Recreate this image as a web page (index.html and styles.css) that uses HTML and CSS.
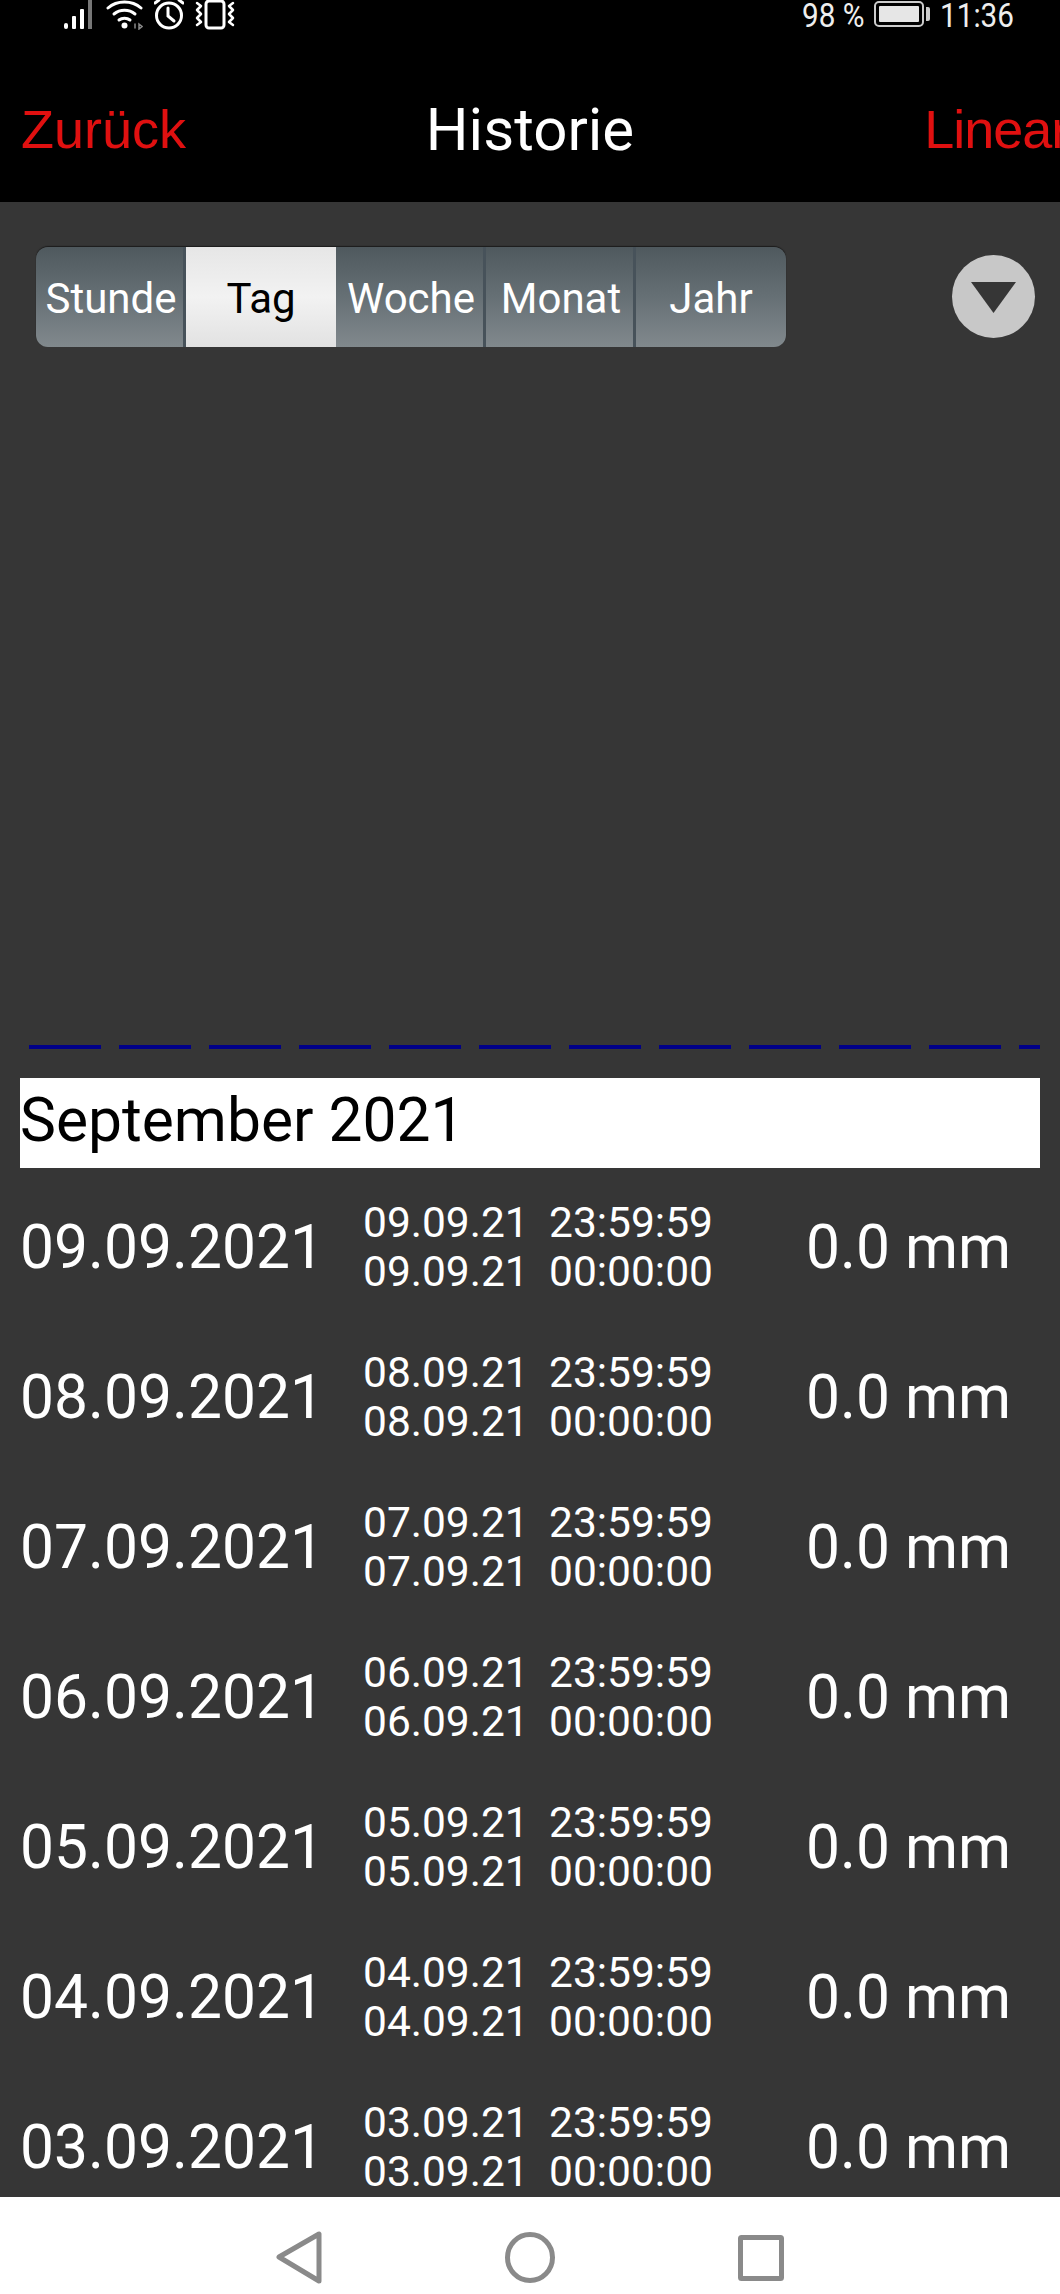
FILE: index.html
```html
<!DOCTYPE html>
<html lang="de">
<head>
    <meta charset="UTF-8">
    <title>Historie</title>
    <link rel="stylesheet" href="styles.css">
</head>
<body>
<div class="phone">
    <div class="top">
        <div class="status">
            <div class="status-icons">
                <svg class="ico-signal" width="32" height="30" viewBox="0 0 32 30">
                    <rect x="0" y="23" width="4" height="6" rx="2" fill="#fff"/>
                    <rect x="8" y="16" width="4" height="13" rx="1" fill="#fff"/>
                    <rect x="16" y="9" width="4" height="20" rx="1" fill="#fff"/>
                    <rect x="24" y="0" width="4" height="29" fill="#777"/>
                </svg>
                <svg class="ico-wifi" width="37" height="30" viewBox="0 0 37 30" fill="none" stroke="#fff" stroke-width="3" stroke-linecap="round">
                    <path d="M2 8C11 0 26 0 35 8"/>
                    <path d="M8 14C14 9 23 9 29 14"/>
                    <path d="M13 20C16 17.500 21 17.500 24 20"/>
                    <circle cx="18.500" cy="25.500" r="3" fill="#fff" stroke="none"/>
                    <path d="M29 24v4M33 24l3 2.500-3 2.500z" stroke="#888" stroke-width="1.500"/>
                </svg>
                <svg class="ico-clock" width="30" height="30" viewBox="0 0 30 30" fill="none" stroke="#fff" stroke-width="3" stroke-linecap="round">
                    <circle cx="15" cy="15.500" r="12.500"/>
                    <path d="M14 8v8l6 5"/>
                    <path d="M1 3L5 0M29 3L25 0"/>
                </svg>
                <svg class="ico-vibrate" width="40" height="30" viewBox="0 0 40 30" fill="none" stroke="#fff" stroke-width="3" stroke-linecap="round" stroke-linejoin="round">
                    <rect x="11" y="1" width="18" height="27" rx="3"/>
                    <path d="M2 3l4 3-4 4 4 4-4 4 4 4-4 3" stroke-width="2.500"/>
                    <path d="M38 3l-4 3 4 4-4 4 4 4-4 4 4 3" stroke-width="2.500"/>
                </svg>
            </div>
            <div class="status-right">
                <span class="status-text pct">98 %</span>
                <span class="battery"><span class="battery-fill"></span></span>
                <span class="battery-nub"></span>
                <span class="status-text clock">11:36</span>
            </div>
        </div>
        <div class="titlebar">
            <a class="back" href="#">Zurück</a>
            <h1 class="title">Historie</h1>
            <a class="scale" href="#">Linear</a>
        </div>
    </div>

    <div class="content">
        <div class="toolbar">
            <div class="segments">
                <span class="seg">Stunde</span>
                <span class="seg on">Tag</span>
                <span class="seg">Woche</span>
                <span class="seg">Monat</span>
                <span class="seg">Jahr</span>
            </div>
            <a class="dropdown" href="#">
                <svg width="45" height="31" viewBox="0 0 45 31"><path d="M0 0H45L22.500 31Z" fill="#363636"/></svg>
            </a>
        </div>

        <!-- Diagrammflaeche, keine Werte im Zeitraum -->
        <div class="chart">
            <div class="baseline"></div>
        </div>

        <div class="month">September 2021</div>

        <div class="list">
            <div class="row">
                <div class="day">09.09.2021</div>
                <div class="range">
                    <div class="line"><span class="d">09.09.21</span><span>23:59:59</span></div>
                    <div class="line"><span class="d">09.09.21</span><span>00:00:00</span></div>
                </div>
                <div class="amount">0.0 mm</div>
            </div>
            <div class="row">
                <div class="day">08.09.2021</div>
                <div class="range">
                    <div class="line"><span class="d">08.09.21</span><span>23:59:59</span></div>
                    <div class="line"><span class="d">08.09.21</span><span>00:00:00</span></div>
                </div>
                <div class="amount">0.0 mm</div>
            </div>
            <div class="row">
                <div class="day">07.09.2021</div>
                <div class="range">
                    <div class="line"><span class="d">07.09.21</span><span>23:59:59</span></div>
                    <div class="line"><span class="d">07.09.21</span><span>00:00:00</span></div>
                </div>
                <div class="amount">0.0 mm</div>
            </div>
            <div class="row">
                <div class="day">06.09.2021</div>
                <div class="range">
                    <div class="line"><span class="d">06.09.21</span><span>23:59:59</span></div>
                    <div class="line"><span class="d">06.09.21</span><span>00:00:00</span></div>
                </div>
                <div class="amount">0.0 mm</div>
            </div>
            <div class="row">
                <div class="day">05.09.2021</div>
                <div class="range">
                    <div class="line"><span class="d">05.09.21</span><span>23:59:59</span></div>
                    <div class="line"><span class="d">05.09.21</span><span>00:00:00</span></div>
                </div>
                <div class="amount">0.0 mm</div>
            </div>
            <div class="row">
                <div class="day">04.09.2021</div>
                <div class="range">
                    <div class="line"><span class="d">04.09.21</span><span>23:59:59</span></div>
                    <div class="line"><span class="d">04.09.21</span><span>00:00:00</span></div>
                </div>
                <div class="amount">0.0 mm</div>
            </div>
            <div class="row">
                <div class="day">03.09.2021</div>
                <div class="range">
                    <div class="line"><span class="d">03.09.21</span><span>23:59:59</span></div>
                    <div class="line"><span class="d">03.09.21</span><span>00:00:00</span></div>
                </div>
                <div class="amount">0.0 mm</div>
            </div>
        </div>
    </div>

    <div class="nav">
        <svg width="46" height="53" viewBox="0 0 46 53" fill="none" stroke="#8a8a8a" stroke-width="5" stroke-linejoin="round"><path d="M43 3V50L3 26Z"/></svg>
        <svg width="50" height="51" viewBox="0 0 50 51" fill="none" stroke="#8a8a8a" stroke-width="5"><ellipse cx="25" cy="25.500" rx="22.500" ry="23"/></svg>
        <svg width="46" height="46" viewBox="0 0 46 46" fill="none" stroke="#8a8a8a" stroke-width="5" stroke-linejoin="round"><rect x="2.500" y="2.500" width="41" height="41" rx="1"/></svg>
    </div>
</div>
</body>
</html>
```

FILE: styles.css
```css
*{
    margin:0;
    padding:0;
    box-sizing:border-box;
    text-decoration:none;
}

body{
    width:1060px;
    height:2294px;
    overflow:hidden;
    font-family:Roboto,"Liberation Sans",sans-serif;
    background:#363636;
}

.phone{
    width:1060px;
    height:2294px;
    display:flex;
    flex-direction:column;
    overflow:hidden;
}

/* Statuszeile und Titel */
.top{
    height:202px;
    flex:none;
    background:#000;
}

.status{
    height:32px;
    display:flex;
    justify-content:space-between;
    align-items:flex-start;
    padding:0 47px 0 64px;
}

.status-icons{
    display:flex;
    gap:10px;
}

.ico-wifi{
    margin-right:1px;
}

.ico-clock{
    margin-right:1px;
}

.status-right{
    display:flex;
    align-items:flex-start;
}

.status-text{
    display:block;
    color:#eee;
    font-size:33px;
    line-height:32px;
    transform:scaleX(.9);
    transform-origin:left top;
    white-space:nowrap;
}

.pct{
    width:72px;
}

.clock{
    width:73px;
    margin-left:10px;
}

.battery{
    width:50px;
    height:26px;
    margin-top:1px;
    border:2px solid #ccc;
    border-radius:5px;
    padding:3px;
}

.battery-fill{
    display:block;
    height:100%;
    background:#e6e6e6;
    border-radius:1px;
}

.battery-nub{
    width:4px;
    height:14px;
    margin:7px 0 0 2px;
    background:#ccc;
    border-radius:0 2px 2px 0;
}

.titlebar{
    height:170px;
    display:grid;
    grid-template-columns:minmax(0,1fr) auto minmax(0,1fr);
    align-items:center;
    padding:24px 0 0;
    overflow:hidden;
}

.back,
.scale{
    font-family:"Liberation Sans",Arial,sans-serif;
    font-size:54px;
    color:#e01010;
}

.back{
    margin-left:21px;
}

.scale{
    margin-left:290px;
    letter-spacing:-1px;
    white-space:nowrap;
}

.title{
    font-size:60px;
    font-weight:400;
    color:#fff;
}

.content{
    flex:1;
    min-height:0;
    display:flex;
    flex-direction:column;
    overflow:hidden;
}

/* Zeitraum-Umschalter */
.toolbar{
    height:144px;
    flex:none;
    display:flex;
    justify-content:space-between;
    align-items:flex-start;
    padding:45px 25px 0 36px;
}

.segments{
    display:flex;
    width:750px;
    height:100px;
    border-radius:12px;
    overflow:hidden;
    box-shadow:0 -1px 1px #1c1c1c;
}

.seg{
    flex:0 0 20%;
    display:flex;
    align-items:center;
    justify-content:center;
    padding-top:2px;
    font-size:42px;
    color:#fff;
    background:linear-gradient(#4f595e,#667075 50%,#81898d);
    box-shadow:inset -3px 0 0 #47525a;
}

.seg:last-child{
    box-shadow:none;
}

.seg.on{
    color:#000;
    background:linear-gradient(#e6e6e6,#f2f2f2 50%,#e2e2e2);
    box-shadow:none;
}

.dropdown{
    width:83px;
    height:83px;
    margin-top:8px;
    border-radius:50%;
    background:#c8c8c8;
    display:flex;
    align-items:center;
    justify-content:center;
    padding-top:2px;
}

/* Diagramm */
.chart{
    height:703px;
    flex:none;
    display:flex;
    align-items:flex-end;
    padding:0 20px 0 29px;
}

.baseline{
    width:100%;
    height:4px;
    background:repeating-linear-gradient(90deg,#000088 0,#000088 72px,transparent 72px,transparent 90px);
}

.month{
    height:90px;
    flex:none;
    margin:29px 20px 0;
    background:#fff;
    color:#000;
    font-size:60.500px;
    line-height:86px;
    white-space:nowrap;
}

/* Monatsliste */
.list{
    margin-top:4px;
    color:#fff;
}

.row{
    height:150px;
    display:flex;
    align-items:center;
    padding-left:20px;
}

.day{
    width:343px;
    flex:none;
    font-size:60.500px;
    white-space:nowrap;
}

.range{
    width:443px;
    flex:none;
    font-size:42.500px;
    line-height:49px;
}

.line{
    display:flex;
    white-space:nowrap;
}

.d{
    width:186px;
}

.amount{
    font-size:60.500px;
    white-space:nowrap;
}

.nav{
    height:97px;
    flex:none;
    background:#fff;
    display:flex;
    align-items:center;
    justify-content:center;
    gap:183px;
    padding-top:24px;
    position:relative;
    z-index:1;
}
```
